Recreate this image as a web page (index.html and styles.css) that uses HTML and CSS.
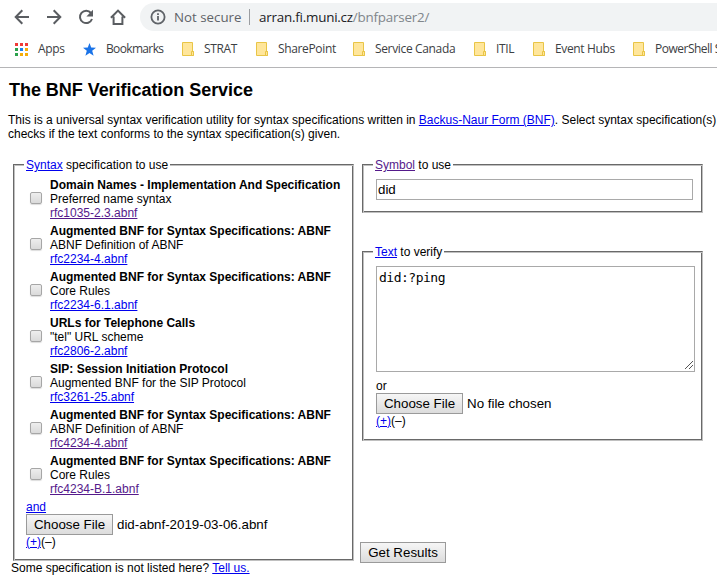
FILE: index.html
```html
<!DOCTYPE html>
<html lang="en">
<head>
<meta charset="utf-8">
<title>The BNF Verification Service</title>
<link rel="stylesheet" href="styles.css">
</head>
<body>
<svg class="defs" width="0" height="0">
  <symbol id="folder" viewBox="0 0 13 15"><path d="M.5.5h10v9h1v4h-11z" fill="#ffe69b" stroke="#e9c546"/><path d="M9.5 9.5h2v4h-2z" fill="#ffe69b" stroke="#e9c546"/></symbol>
</svg>
<header class="chrome">
  <div class="toolbar">
    <svg class="nav" viewBox="0 0 16 16"><path d="M15 8H2M8.3 1.3 1.7 8l6.6 6.7"/></svg>
    <svg class="nav" viewBox="0 0 16 16"><path d="M1 8h13M7.7 1.3 14.3 8l-6.6 6.7"/></svg>
    <svg class="nav" viewBox="0 0 16 16"><path d="M13 4A6.2 6.2 0 1 0 14 10"/><path class="solid" d="M15 .8v6.6H8.4z"/></svg>
    <svg class="nav" viewBox="0 0 16 16"><path d="M.9 8.8 8 1.6l7.1 7.2M3.6 7.5v7.4h8.8V7.5"/></svg>
    <div class="omnibox">
      <svg class="info" viewBox="0 0 16 16"><circle cx="8" cy="8" r="6.6"/><path d="M8 7v4.6M8 4.2v1.9"/></svg>
      <span class="secure">Not secure</span>
      <span class="divider"></span>
      <span class="url">arran.fi.muni.cz<span class="path">/bnfparser2/</span></span>
    </div>
  </div>
  <nav class="bookmarks">
    <a><svg class="bm" viewBox="0 0 13 13"><path fill="#f03a37" d="M0 0h3v3H0zM5 0h3v3H5zM10 0h3v3h-3z"/><path fill="#2ba24c" d="M0 5h3v3H0zM0 10h3v3H0z"/><path fill="#1a82f0" d="M5 5h3v3H5z"/><path fill="#f6ad08" d="M10 5h3v3h-3zM5 10h3v3H5zM10 10h3v3h-3z"/></svg><span>Apps</span></a>
    <a class="tight"><svg class="bm" viewBox="0 0 13 13"><path fill="#1a73e8" d="m6.5 0 1.7 4.6 4.8.2-3.8 3 1.4 4.9-4.1-2.8-4.1 2.8 1.4-4.9-3.8-3 4.8-.2z"/></svg><span>Bookmarks</span></a>
    <a><svg class="folder"><use href="#folder"/></svg><span>STRAT</span></a>
    <a><svg class="folder"><use href="#folder"/></svg><span>SharePoint</span></a>
    <a><svg class="folder"><use href="#folder"/></svg><span>Service Canada</span></a>
    <a><svg class="folder"><use href="#folder"/></svg><span>ITIL</span></a>
    <a><svg class="folder"><use href="#folder"/></svg><span>Event Hubs</span></a>
    <a class="snug"><svg class="folder"><use href="#folder"/></svg><span>PowerShell S</span></a>
  </nav>
</header>
<main>
  <h1>The BNF Verification Service</h1>
  <p class="intro">This is a universal syntax verification utility for syntax specifications written in <a class="link">Backus-Naur Form (BNF)</a>. Select syntax specification(s)<br>checks if the text conforms to the syntax specification(s) given.</p>
  <div class="columns">
    <section class="left">
      <fieldset class="specs">
        <legend><a class="link">Syntax</a> specification to use</legend>
        <div class="spec"><i class="check"></i><div><b>Domain Names - Implementation And Specification</b><br>Preferred name syntax<br><a class="link visited">rfc1035-2.3.abnf</a></div></div>
        <div class="spec"><i class="check"></i><div><b>Augmented BNF for Syntax Specifications: ABNF</b><br>ABNF Definition of ABNF<br><a class="link">rfc2234-4.abnf</a></div></div>
        <div class="spec"><i class="check"></i><div><b>Augmented BNF for Syntax Specifications: ABNF</b><br>Core Rules<br><a class="link">rfc2234-6.1.abnf</a></div></div>
        <div class="spec"><i class="check"></i><div><b>URLs for Telephone Calls</b><br>"tel" URL scheme<br><a class="link">rfc2806-2.abnf</a></div></div>
        <div class="spec"><i class="check"></i><div><b>SIP: Session Initiation Protocol</b><br>Augmented BNF for the SIP Protocol<br><a class="link">rfc3261-25.abnf</a></div></div>
        <div class="spec"><i class="check"></i><div><b>Augmented BNF for Syntax Specifications: ABNF</b><br>ABNF Definition of ABNF<br><a class="link visited">rfc4234-4.abnf</a></div></div>
        <div class="spec"><i class="check"></i><div><b>Augmented BNF for Syntax Specifications: ABNF</b><br>Core Rules<br><a class="link visited">rfc4234-B.1.abnf</a></div></div>
        <div class="and"><a class="link">and</a></div>
        <div class="file"><button class="btn choose">Choose File</button><span>did-abnf-2019-03-06.abnf</span></div>
        <div class="more"><a class="link">(+)</a>(–)</div>
      </fieldset>
      <p class="note">Some specification is not listed here? <a class="link">Tell us.</a></p>
    </section>
    <section class="right">
      <fieldset class="symbol">
        <legend><a class="link visited">Symbol</a> to use</legend>
        <input class="field" type="text" value="did">
      </fieldset>
      <fieldset class="verify">
        <legend><a class="link">Text</a> to verify</legend>
        <div class="area">did:?ping<svg class="grip" viewBox="0 0 9 9"><path d="M.5 8.5l8-8M4.5 8.5l4-4"/></svg></div>
        <div class="or">or</div>
        <div class="file"><button class="btn choose">Choose File</button><span>No file chosen</span></div>
        <div class="more"><a class="link">(+)</a>(–)</div>
      </fieldset>
      <button class="btn results">Get Results</button>
    </section>
  </div>
</main>
</body>
</html>
```
FILE: styles.css
```css
* { box-sizing: border-box; }
html, body { height: 576px; overflow: hidden; }
body { margin: 0; width: 717px; background: #fff; color: #000; font: 12px/14px "Liberation Sans", Arial, sans-serif; }
.defs { display: block; height: 0; }

.chrome { height: 68px; border-bottom: 1px solid #b5b5b7; color: #3c4043; font-family: "Open Sans", "Noto Sans", sans-serif; }
.toolbar { display: flex; align-items: center; height: 34px; padding-left: 14px; gap: 16px; }
.nav { width: 16px; height: 16px; flex: none; fill: none; stroke: #5a5d61; stroke-width: 2; }
.nav .solid { fill: #5a5d61; stroke: none; }
.omnibox { display: flex; align-items: center; flex: 1; height: 28px; margin-left: -2px; padding-left: 10px; background: #f1f3f4; border-radius: 14px 0 0 14px; font-size: 14px; line-height: 20px; white-space: nowrap; }
.info { width: 16px; height: 16px; margin-right: 8px; fill: none; stroke: #5f6368; stroke-width: 1.8; }
.secure { width: 67px; color: #5f6368; font-size: 13.3px; }
.divider { width: 1px; height: 16px; margin: 0 9px 0 8px; background: #9a9da1; }
.url { color: #202124; font-size: 13.4px; letter-spacing: -.22px; }
.path { color: #80868b; }

.bookmarks { display: grid; grid-template-columns: 68px 99px 74px 97px 121px 59px 100px 90px; height: 30px; padding-left: 15px; align-items: center; font-size: 12px; line-height: 16px; letter-spacing: -.35px; white-space: nowrap; }
.bookmarks a { display: flex; align-items: center; height: 28px; }
.bookmarks span { margin-left: 9px; }
.bookmarks a:nth-child(-n+2) span { margin-left: 10px; }
.bookmarks .tight { letter-spacing: -.65px; }
.bookmarks .snug { letter-spacing: -.5px; }
.bm { width: 13px; height: 13px; flex: none; }
.folder { width: 13px; height: 15px; flex: none; }

main { padding-left: 8px; }
h1 { margin: 11px 0 0 1px; font-size: 18px; line-height: 22px; letter-spacing: -.04px; white-space: nowrap; }
.intro { margin: 12px 0 0; white-space: nowrap; }
.link { color: #0000ee; text-decoration: underline; }
.visited { color: #551a8b; }

.columns { display: flex; padding: 17px 0 0 5px; }
.left { width: 341px; }
.right { width: 341px; margin-left: 8px; }
fieldset { margin: 0; min-width: 0; border: 1px solid; border-color: #696969 #c0c0c0 #c0c0c0 #696969; box-shadow: inset 1px 1px #c0c0c0, inset -1px -1px #696969; padding: 0 12px; }
legend { position: relative; margin-left: -2px; padding: 0 2px; height: 13px; background: #fff; white-space: nowrap; }
.spec { display: flex; align-items: center; height: 46px; padding-left: 4px; white-space: nowrap; }
.specs { height: 403px; }
.specs legend + .spec { margin-top: 5px; }
.spec > div { margin-left: 8px; }
.check { width: 12px; height: 12px; margin-bottom: 2px; border: 1px solid #a6a6a6; border-radius: 2px; background: linear-gradient(#eee, #dadada); box-shadow: 0 1px 1px #ddd; }
.and { height: 14px; margin-top: 2px; }
.file { display: flex; align-items: center; font-size: 13.333px; white-space: nowrap; }
.file span { margin-left: 4px; }
.btn { height: 21px; padding: 0; border: 1px solid #9a9a9a; border-radius: 0; background: linear-gradient(#f6f6f6, #dcdcdc); color: #000; font: 13.333px/17px "Liberation Sans", Arial, sans-serif; white-space: nowrap; }
.choose { width: 87px; }
.note { margin: 0 0 0 -2px; white-space: nowrap; }

.symbol { height: 55px; }
.field { display: block; width: 317px; height: 21px; margin: 8px 0 0 1px; padding: 0 1px; border: 1px solid #a9a9a9; border-radius: 0; background: #fff; font: 13.333px "Liberation Sans", Arial, sans-serif; }
.verify { height: 196px; margin-top: 32px; padding-left: 13px; }
.verify legend { margin-left: -3px; }
.area { position: relative; width: 319px; height: 106px; margin-top: 8px; padding: 3px 2px; border: 1px solid #a9a9a9; background: #fff; font: 13px/15px "DejaVu Sans Mono", monospace; letter-spacing: -.49px; }
.grip { position: absolute; right: 1px; bottom: 1px; width: 9px; height: 9px; fill: none; stroke: #555; stroke-width: 1; shape-rendering: crispEdges; }
.or { margin-top: 7px; height: 14px; }
.results { display: block; width: 86px; margin: 101px 0 0 -2px; }
```
